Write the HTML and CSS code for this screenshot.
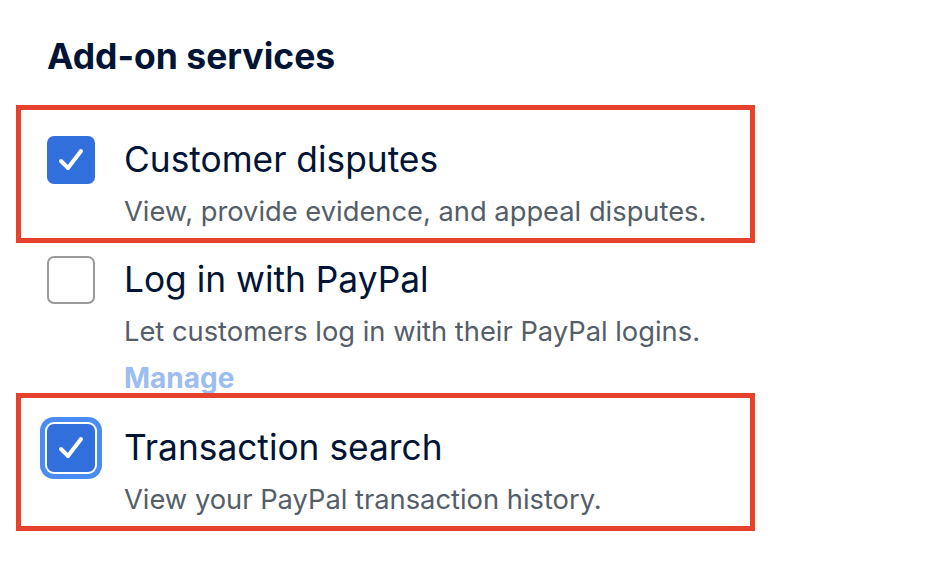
FILE: index.html
```html
<!doctype html>
<html>
<head>
<meta charset="utf-8" />
<meta name="viewport" content="width=device-width" />
<title>Add-on services</title>
<link rel="stylesheet" href="styles.css">
</head>
<body>

<div class="addons">
  <h2 class="addons-title">Add-on services</h2>

  <div class="addon addon--marked">
    <span class="check check--on">
      <svg viewBox="0 0 48 48" width="48" height="48"><path d="M14 25 L21 32 L34 15" /></svg>
    </span>
    <div class="addon-text">
      <div class="addon-name">Customer disputes</div>
      <div class="addon-desc">View, provide evidence, and appeal disputes.</div>
    </div>
  </div>

  <div class="addon">
    <span class="check"></span>
    <div class="addon-text">
      <div class="addon-name">Log in with PayPal</div>
      <div class="addon-desc">Let customers log in with their PayPal logins.</div>
      <a class="addon-link">Manage</a>
    </div>
  </div>

  <div class="addon addon--marked">
    <span class="check check--on check--focus">
      <svg viewBox="0 0 48 48" width="48" height="48"><path d="M14 25 L21 32 L34 15" /></svg>
    </span>
    <div class="addon-text">
      <div class="addon-name">Transaction search</div>
      <div class="addon-desc">View your PayPal transaction history.</div>
    </div>
  </div>
</div>

</body>
</html>
```

FILE: styles.css
```css
* { box-sizing: border-box; }

body {
  margin: 0;
  background: #fff;
  font-family: Inter, "Noto Sans", sans-serif;
  color: #001435;
}

.addons {
  padding: 37px 0 60px 47px;
  display: flex;
  flex-direction: column;
  gap: 28px;
}

.addons-title {
  margin: 0 0 31px;
  font-size: 35.5px;
  line-height: 40px;
  font-weight: 700;
}

.addon {
  position: relative;
  display: flex;
  gap: 29px;
}

/* red annotation frame */
.addon--marked::before {
  content: '';
  box-sizing: border-box;
  position: absolute;
  left: -31px;
  top: -31px;
  bottom: -15px;
  width: 739px;
  border: 5px solid #e5412b;
}

.check {
  flex: none;
  width: 48px;
  height: 48px;
  border: 2px solid #9a9a9a;
  border-radius: 7px;
  background: #fff;
}

.check--on {
  border: none;
  background: #306fdc;
}

.check--on svg {
  display: block;
  fill: none;
  stroke: #fff;
  stroke-width: 4;
  stroke-linecap: round;
  stroke-linejoin: round;
}

.check--focus {
  box-shadow: 0 0 0 2px #fff, 0 0 0 7px #4a8cf2;
}

.addon-text {
  display: flex;
  flex-direction: column;
}

.addon-name {
  font-size: 35.3px;
  line-height: 48px;
}

.addon-desc {
  margin-top: 12px;
  font-size: 27.3px;
  line-height: 32px;
  color: #545d68;
}

.addon-link {
  margin-top: 12px;
  font-size: 28px;
  line-height: 36px;
  font-weight: 700;
  color: #9bbdf0;
}
```
